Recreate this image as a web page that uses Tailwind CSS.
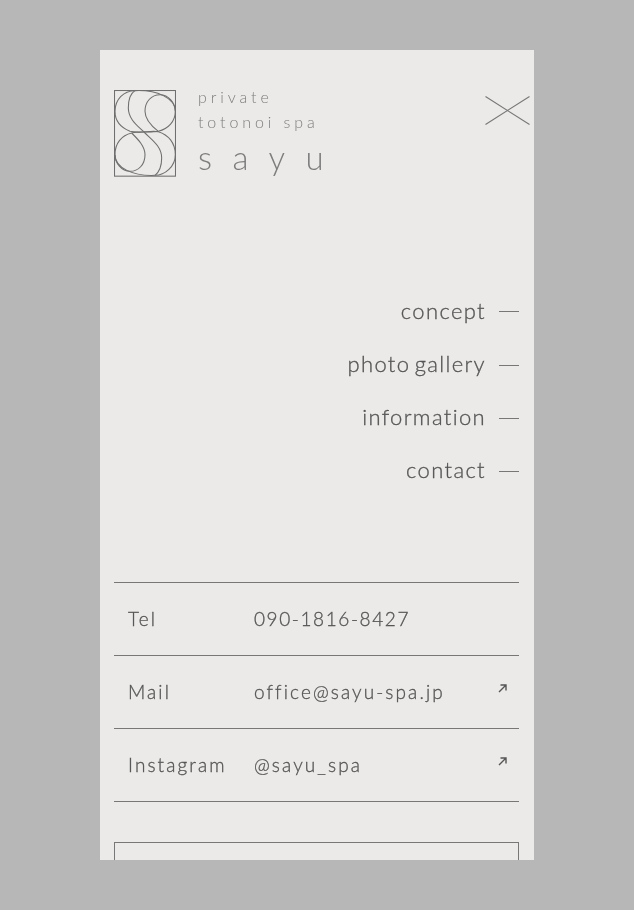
<!DOCTYPE html>
<html lang="ja"><head><meta charset="utf-8">
<script src="https://cdn.jsdelivr.net/npm/@tailwindcss/browser@4"></script></head>
<body class="bg-[#b7b7b7] h-[910px] overflow-hidden font-['Lato',sans-serif] pt-[50px]">
<div class="mx-[100px] w-[434px] h-[810px] bg-[#ebeae8] overflow-hidden pl-[14px] pr-[15px] text-[#555555] font-light [-webkit-text-stroke:0.3px]">
  <header class="flex h-[126px] pt-[40px]">
    <svg class="w-[62px] h-[87px] shrink-0" viewBox="42 61 186 261" fill="none" stroke="#6f6f6f" stroke-width="3.2">
      <rect x="43.5" y="62.5" width="183" height="257" stroke-width="3.2"/>
      <path d="M105 63C70 63 45 90 45 125C45 155 65 175 90 185C120 192 150 182 175 186C205 195 226 220 226 255C226 290 195 317 165 317"/>
      <path d="M105 63C90 72 85 95 85 115C85 150 115 170 135 190C155 210 185 230 185 265C185 285 180 305 165 317"/>
      <path d="M105 63C170 60 226 85 226 125C226 155 205 178 175 185C150 190 120 184 95 190C65 197 45 220 45 255C45 295 100 320 165 317"/>
      <path d="M226 125C226 100 205 75 180 75C155 75 135 95 135 125C135 150 155 170 175 185"/>
      <path d="M45 255C45 280 65 305 90 305C115 305 135 285 135 255C135 230 115 210 95 190"/>
    </svg>
    <div class="ml-[22px] w-[180px] text-[#7d7d7d] will-change-transform [-webkit-text-stroke:0px]">
      <p class="text-[16px] leading-[25px] tracking-[3.9px] -mt-[6px]">private</p>
      <p class="text-[16px] leading-[25px] tracking-[3.9px]">totonoi spa</p>
      <p class="text-[33px] leading-[46px] tracking-[20.4px]">sayu</p>
    </div>
    <svg class="ml-auto -mr-[11px] mt-[6px] w-[45px] h-[29px] shrink-0" viewBox="0 0 45 29" fill="none" stroke="#777" stroke-width="1.1">
      <path d="M0.5 0.5L44.5 28.5M0.5 28.5L44.5 0.5"/>
    </svg>
  </header>
  <nav class="mt-[107px] flex flex-col items-end will-change-transform">
    <a class="flex items-center h-[54px] text-[22px] tracking-[1.35px] [word-spacing:-3px]">concept<span class="ml-[13px] mt-[2px] w-[20px] h-px bg-[#777]"></span></a>
    <a class="flex items-center h-[53px] text-[22px] tracking-[1.35px] [word-spacing:-3px]">photo gallery<span class="ml-[13px] mt-[4px] w-[20px] h-px bg-[#777]"></span></a>
    <a class="flex items-center h-[53px] text-[22px] tracking-[1.35px] [word-spacing:-3px]">information<span class="ml-[13px] mt-[4px] w-[20px] h-px bg-[#777]"></span></a>
    <a class="flex items-center h-[53px] text-[22px] tracking-[1.35px] [word-spacing:-3px]">contact<span class="ml-[13px] mt-[4px] w-[20px] h-px bg-[#777]"></span></a>
  </nav>
  <dl class="mt-[86px] border-t border-[#777] text-[19px] tracking-[2.1px] will-change-transform">
    <div class="flex items-center h-[73px] border-b border-[#777] pl-[14px]"><dt class="w-[126px] pt-[1px]">Tel</dt><dd class="tracking-[1.6px] pt-[1px]">090-1816-8427</dd></div>
    <div class="flex items-center h-[73px] border-b border-[#777] pl-[14px]"><dt class="w-[126px]">Mail</dt><dd class="tracking-[2.1px]">office@sayu-spa.jp</dd>
      <svg class="ml-auto mr-[12px] mb-[7px] w-[9px] h-[9px]" viewBox="0 0 9 9" fill="none" stroke="#555" stroke-width="1.4"><path d="M1 8L7.5 1.5M2.5 1H8V6.5"/></svg></div>
    <div class="flex items-center h-[73px] border-b border-[#777] pl-[14px]"><dt class="w-[126px]">Instagram</dt><dd class="tracking-[2.1px]">@sayu_spa</dd>
      <svg class="ml-auto mr-[12px] mb-[7px] w-[9px] h-[9px]" viewBox="0 0 9 9" fill="none" stroke="#555" stroke-width="1.4"><path d="M1 8L7.5 1.5M2.5 1H8V6.5"/></svg></div>
  </dl>
  <div class="mt-[40px] h-[60px] border border-[#777]"></div>
</div>
</body></html>
